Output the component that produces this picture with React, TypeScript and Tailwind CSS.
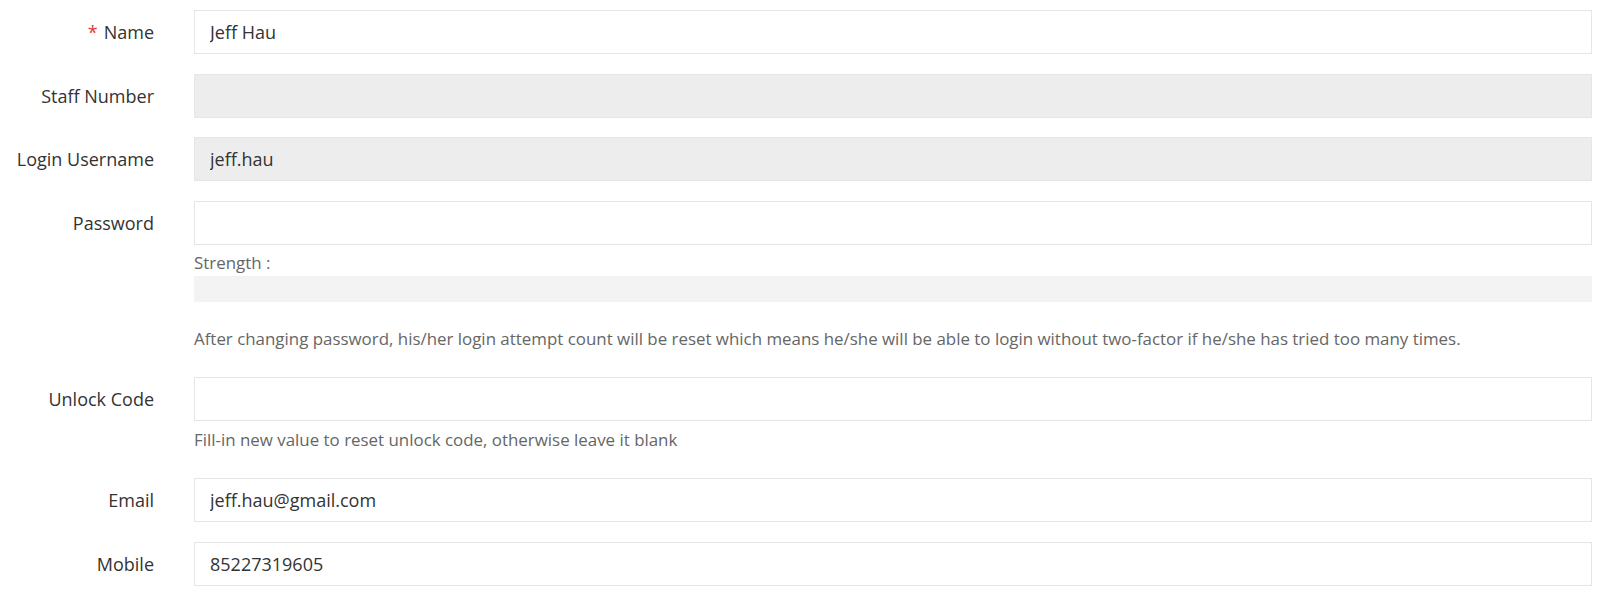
import React from "react";

function Label({ children, required }: { children: React.ReactNode; required?: boolean }) {
  return (
    <div className="w-[154px] shrink-0 h-[44px] flex items-center justify-end text-[18px] text-[#333333] whitespace-nowrap">
      {required && <span className="text-[#e4393c] mr-[6px]">*</span>}
      {children}
    </div>
  );
}

function Field({ value, disabled }: { value?: string; disabled?: boolean }) {
  return (
    <input
      readOnly
      defaultValue={value ?? ""}
      className={
        "block w-full h-[44px] border border-[#e6e6e6] px-[15px] text-[18px] text-[#333333] outline-none " +
        (disabled ? "bg-[#ededed]" : "bg-white")
      }
    />
  );
}

export default function App() {
  return (
    <div className="w-[1600px] h-[597px] bg-white pt-[10px] pr-[8px] font-['Open_Sans',sans-serif]">
      <div className="flex items-start">
        <Label required>Name</Label>
        <div className="ml-10 flex-1">
          <Field value="Jeff Hau" />
        </div>
      </div>

      <div className="flex items-start mt-[20px]">
        <Label>Staff Number</Label>
        <div className="ml-10 flex-1">
          <Field disabled />
        </div>
      </div>

      <div className="flex items-start mt-[19px]">
        <Label>Login Username</Label>
        <div className="ml-10 flex-1">
          <Field value="jeff.hau" disabled />
        </div>
      </div>

      <div className="flex items-start mt-[20px]">
        <Label>Password</Label>
        <div className="ml-10 flex-1">
          <Field />
          <div className="mt-[6px] text-[16.9px] leading-[24px] text-[#666666]">Strength :</div>
          <div className="mt-[1px] h-[26px] bg-[#f3f3f3]" />
          <div className="mt-[25px] text-[16.9px] leading-[24px] text-[#666666]">
            After changing password, his/her login attempt count will be reset which means he/she will be able to login without two-factor if he/she has tried too many times.
          </div>
        </div>
      </div>

      <div className="flex items-start mt-[26px]">
        <Label>Unlock Code</Label>
        <div className="ml-10 flex-1">
          <Field />
          <div className="mt-[7px] text-[16.9px] leading-[24px] text-[#666666]">
            Fill-in new value to reset unlock code, otherwise leave it blank
          </div>
        </div>
      </div>

      <div className="flex items-start mt-[26px]">
        <Label>Email</Label>
        <div className="ml-10 flex-1">
          <Field value="jeff.hau@gmail.com" />
        </div>
      </div>

      <div className="flex items-start mt-[20px]">
        <Label>Mobile</Label>
        <div className="ml-10 flex-1">
          <Field value="85227319605" />
        </div>
      </div>
    </div>
  );
}
